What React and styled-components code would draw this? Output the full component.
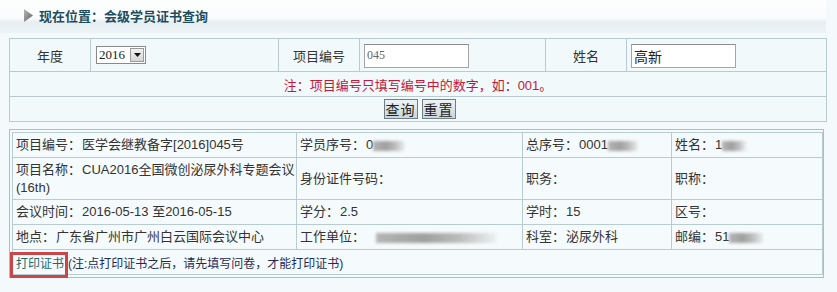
import styled, { createGlobalStyle } from 'styled-components'

const GlobalStyle = createGlobalStyle`
  body {
    margin: 0;
    background: #f4f9fb;
    font-family: "Liberation Sans", "Noto Sans CJK SC", sans-serif;
    color: #333;
  }
`

const Page = styled.div`
  width: 837px;
  height: 292px;
  overflow: hidden;
`

const Header = styled.div`
  width: 826px;
  height: 33px;
  background: linear-gradient(
    to bottom,
    #fdfefe 0,
    #fafcfd 18px,
    #e7eef2 22px,
    #edf3f6 33px
  );
`

const HeaderTitle = styled.h1`
  margin: 0;
  height: 30px;
  padding-left: 24px;
  display: flex;
  align-items: center;
  gap: 6px;
  font-size: 13px;
  font-weight: bold;
  color: #1c4d60;
  font-family: "Noto Sans CJK SC", sans-serif;
`

const SearchTable = styled.table`
  margin: 5px 0 0 9px;
  width: 817px;
  border-collapse: collapse;
  table-layout: fixed;
  background: #f2f9fb;
  font-size: 13px;

  td {
    border: 1px solid #b8cbd1;
    padding: 0;
  }
`

const SearchRow = styled.tr`
  height: ${({ $h }) => $h}px;
`

const LabelCell = styled.td`
  text-align: center;
  color: #333;
`

const FieldCell = styled.td`
  padding-left: 4px !important;
`

const Select = styled.div`
  display: inline-flex;
  align-items: center;
  justify-content: space-between;
  box-sizing: border-box;
  width: 50px;
  height: 18px;
  margin-left: 1px;
  border: 1px solid #8a8a8a;
  background: #fff;
  font-family: "Liberation Serif", serif;
  font-size: 13px;
  color: #222;
  padding-left: 2px;
`

const SelectArrow = styled.span`
  width: 14px;
  height: 14px;
  margin-right: 1px;
  box-sizing: border-box;
  border: 1px solid #9a9a9a;
  background: linear-gradient(#f2f2f2, #d5d5d5);
  display: flex;
  align-items: center;
  justify-content: center;
`

const TextInput = styled.input`
  box-sizing: border-box;
  width: 105px;
  height: 24px;
  margin: 1px 0 0 0;
  border: 1px solid #a5a5a5;
  border-top-color: #8c8c8c;
  background: #fff;
  padding: 0 2px;
  outline: none;
  font-family: ${({ $serif }) =>
    $serif ? '"Liberation Serif", serif' : '"Noto Sans CJK SC", sans-serif'};
  font-size: ${({ $serif }) => ($serif ? '12px' : '14px')};
  color: ${({ $serif }) => ($serif ? '#666' : '#222')};
`

const NoteCell = styled.td`
  text-align: center;
  color: #c3183a;
  font-size: 13px;
`

const ButtonCell = styled.td`
  text-align: center;
`

const Buttons = styled.div`
  display: inline-flex;
  gap: 4px;
  padding-left: 3px;
`

const Button = styled.button`
  height: 20px;
  padding: 0 1px;
  border: 1px solid #6f7f86;
  background: linear-gradient(#eef3f5, #c9d6dc);
  font-family: "Noto Sans CJK SC", sans-serif;
  font-size: 14px;
  line-height: 16px;
  color: #222;
  letter-spacing: 1px;
`

const ResultBox = styled.div`
  margin: 7px 0 0 9px;
  width: 815px;
  box-sizing: border-box;
  border: 1px solid #a9bfc5;
  padding: 2px;
  background: #f5fafc;
`

const ResultTable = styled.table`
  width: 100%;
  border-collapse: collapse;
  table-layout: fixed;
  font-size: 13px;
  color: #333;

  td {
    border: 1px solid #b8cbd1;
    padding: 0 0 0 3px;
    vertical-align: middle;
    white-space: nowrap;
    overflow: hidden;
  }
`

const ResultRow = styled.tr`
  height: ${({ $h }) => $h}px;
`

const Cell = styled.td`
  line-height: 18px;
`

const Key = styled.span`
  margin-right: 1px;
`

const Blur = styled.span`
  display: inline-block;
  vertical-align: middle;
  width: ${({ $w }) => $w}px;
  height: 10px;
  margin-left: ${({ $gap }) => $gap || 0}px;
  background: linear-gradient(
    to right,
    #b5b5b5,
    #9f9f9f 40%,
    #bdbdbd 70%,
    rgba(200, 200, 200, 0.2)
  );
  filter: blur(1.5px);
`

const PrintCell = styled.td`
  font-size: 12px;
  overflow: visible !important;
`

const PrintLink = styled.a`
  position: relative;
  color: #1d6a6c;
  text-decoration: none;

  &::after {
    content: '';
    position: absolute;
    left: -6px;
    right: -4px;
    top: -5px;
    bottom: -7px;
    border: 3px solid #c9474b;
  }
`

const PrintNote = styled.span`
  color: #1b2c5a;
  margin-left: 4px;
`

function TriangleIcon() {
  return (
    <svg width="9" height="13" viewBox="0 0 9 13">
      <defs>
        <linearGradient id="tri" x1="0" y1="0" x2="1" y2="1">
          <stop offset="0" stopColor="#b9b9b9" />
          <stop offset="1" stopColor="#5f5f5f" />
        </linearGradient>
      </defs>
      <polygon points="0,0 9,6.5 0,13" fill="url(#tri)" />
    </svg>
  )
}

export default function App() {
  return (
    <Page>
      <GlobalStyle />
      <Header>
        <HeaderTitle>
          <TriangleIcon />
          现在位置：会级学员证书查询
        </HeaderTitle>
      </Header>

      <SearchTable>
        <colgroup>
          <col style={{ width: 81 }} />
          <col style={{ width: 188 }} />
          <col style={{ width: 81 }} />
          <col style={{ width: 186 }} />
          <col style={{ width: 81 }} />
          <col style={{ width: 200 }} />
        </colgroup>
        <tbody>
          <SearchRow $h={33}>
            <LabelCell>年度</LabelCell>
            <FieldCell>
              <Select>
                2016
                <SelectArrow>
                  <svg width="7" height="4" viewBox="0 0 7 4">
                    <polygon points="0,0 7,0 3.5,4" fill="#111" />
                  </svg>
                </SelectArrow>
              </Select>
            </FieldCell>
            <LabelCell>项目编号</LabelCell>
            <FieldCell>
              <TextInput $serif defaultValue="045" />
            </FieldCell>
            <LabelCell>姓名</LabelCell>
            <FieldCell>
              <TextInput defaultValue="高新" />
            </FieldCell>
          </SearchRow>
          <SearchRow $h={25}>
            <NoteCell colSpan={6}>
              注：项目编号只填写编号中的数字，如：001。
            </NoteCell>
          </SearchRow>
          <SearchRow $h={25}>
            <ButtonCell colSpan={6}>
              <Buttons>
                <Button>查询</Button>
                <Button>重置</Button>
              </Buttons>
            </ButtonCell>
          </SearchRow>
        </tbody>
      </SearchTable>

      <ResultBox>
        <ResultTable>
          <colgroup>
            <col style={{ width: 284 }} />
            <col style={{ width: 226 }} />
            <col style={{ width: 149 }} />
            <col style={{ width: 151 }} />
          </colgroup>
          <tbody>
            <ResultRow $h={25}>
              <Cell>
                <Key>项目编号：</Key>医学会继教备字[2016]045号
              </Cell>
              <Cell>
                <Key>学员序号：</Key>0<Blur $w={32} />
              </Cell>
              <Cell>
                <Key>总序号：</Key>0001<Blur $w={30} />
              </Cell>
              <Cell>
                <Key>姓名：</Key>1<Blur $w={24} />
              </Cell>
            </ResultRow>
            <ResultRow $h={42}>
              <Cell>
                <Key>项目名称：</Key>CUA2016全国微创泌尿外科专题会议
                <br />
                (16th)
              </Cell>
              <Cell>身份证件号码：</Cell>
              <Cell>职务：</Cell>
              <Cell>职称：</Cell>
            </ResultRow>
            <ResultRow $h={25}>
              <Cell>
                <Key>会议时间：</Key>2016-05-13 至2016-05-15
              </Cell>
              <Cell>
                <Key>学分：</Key>2.5
              </Cell>
              <Cell>
                <Key>学时：</Key>15
              </Cell>
              <Cell>区号：</Cell>
            </ResultRow>
            <ResultRow $h={25}>
              <Cell>
                <Key>地点：</Key>广东省广州市广州白云国际会议中心
              </Cell>
              <Cell>
                <Key>工作单位：</Key>
                <Blur $w={120} $gap={10} />
              </Cell>
              <Cell>
                <Key>科室：</Key>泌尿外科
              </Cell>
              <Cell>
                <Key>邮编：</Key>51<Blur $w={34} />
              </Cell>
            </ResultRow>
            <ResultRow $h={25}>
              <PrintCell colSpan={4}>
                <PrintLink href="#">打印证书</PrintLink>
                <PrintNote>(注:点打印证书之后，请先填写问卷，才能打印证书)</PrintNote>
              </PrintCell>
            </ResultRow>
          </tbody>
        </ResultTable>
      </ResultBox>
    </Page>
  )
}
